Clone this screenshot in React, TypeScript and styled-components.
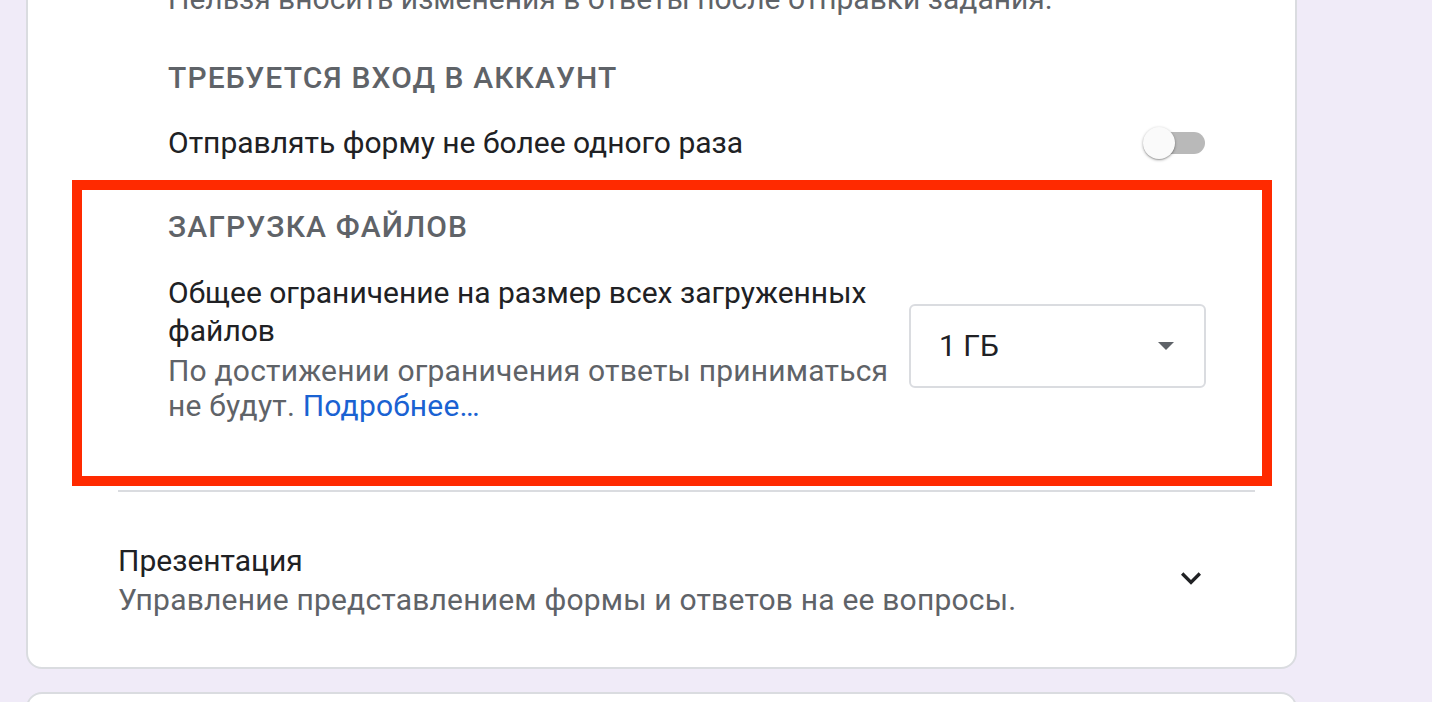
import React from 'react';
import styled, { createGlobalStyle } from 'styled-components';

const GlobalStyle = createGlobalStyle`
  html, body {
    margin: 0;
    padding: 0;
    background: #f0ebf8;
    font-family: Roboto, 'Noto Sans', Arial, sans-serif;
    overflow: hidden;
  }
`;

const Page = styled.div`
  padding-left: 26px;
  width: 1271px;
  height: 702px;
  overflow: hidden;
`;

const Card = styled.div<{ cropTop?: number }>`
  box-sizing: border-box;
  width: 1271px;
  background: #fff;
  border: 2px solid #dadce0;
  border-radius: 16px;
  margin-top: ${({ cropTop }) => (cropTop ? `-${cropTop}px` : '0')};
  padding: 0 40px 48px 90px;
`;

const NextCard = styled(Card)`
  margin-top: 23px;
  height: 80px;
`;

const Section = styled.div`
  padding: 0 49px 0 50px;
`;

const Highlight = styled.div`
  box-sizing: border-box;
  width: 1200px;
  margin-left: -46px;
  margin-top: 17px;
  border: 10px solid #ff2a00;
  padding: 17px 56px 53px 86px;
`;

const Note = styled.div`
  font-size: 30px;
  line-height: 40px;
  color: #5f6368;
`;

const Heading = styled.div<{ top: number }>`
  margin-top: ${({ top }) => top}px;
  font-size: 30px;
  line-height: 40px;
  font-weight: 500;
  letter-spacing: 1.1px;
  text-transform: uppercase;
  color: #5f6368;
`;

const Row = styled.div<{ top: number }>`
  display: flex;
  align-items: center;
  justify-content: space-between;
  gap: 16px;
  margin-top: ${({ top }) => top}px;
`;

const Label = styled.div`
  font-size: 30px;
  line-height: 40px;
  color: #202124;
`;

const TextBlock = styled.div`
  flex: 1;
`;

const Title = styled.div<{ lh?: number }>`
  font-size: 30px;
  line-height: ${({ lh }) => lh || 38}px;
  color: #202124;
`;

const Desc = styled.div<{ lh?: number; top?: number }>`
  margin-top: ${({ top }) => top || 0}px;
  font-size: 30px;
  line-height: ${({ lh }) => lh || 35}px;
  letter-spacing: 0.2px;
  color: #5f6368;
`;

const Link = styled.a`
  color: #1a62d2;
  text-decoration: none;
`;

const Track = styled.div`
  position: relative;
  width: 60px;
  height: 22px;
  margin-right: 1px;
  border-radius: 11px;
  background: #b9b9b9;
`;

const Thumb = styled.div`
  position: absolute;
  left: -2px;
  top: -5px;
  width: 32px;
  height: 32px;
  border-radius: 50%;
  background: #fafafa;
  box-shadow: 0 1px 3px rgba(0, 0, 0, 0.35), 0 1px 1px rgba(0, 0, 0, 0.14);
`;

const Select = styled.div`
  box-sizing: border-box;
  width: 297px;
  height: 84px;
  flex-shrink: 0;
  display: flex;
  align-items: center;
  justify-content: space-between;
  padding: 0 30px 0 28px;
  border: 2px solid #dadce0;
  border-radius: 6px;
  margin-top: -6px;
  font-size: 30px;
  color: #202124;
`;

const Divider = styled.div`
  height: 2px;
  margin-top: 4px;
  background: #dadce0;
`;

const Expand = styled.div`
  display: flex;
  align-items: center;
  justify-content: space-between;
  margin-top: 49px;
`;

const IconBox = styled.div`
  width: 40px;
  height: 40px;
  margin-right: 44px;
  margin-top: -4px;
`;

const Switch = () => (
  <Track>
    <Thumb />
  </Track>
);

export default function App() {
  return (
    <>
      <GlobalStyle />
      <Page>
        <Card cropTop={23}>
          <Section>
            <Note>Нельзя вносить изменения в ответы после отправки задания.</Note>
            <Heading top={39}>Требуется вход в аккаунт</Heading>
            <Row top={25}>
              <Label>Отправлять форму не более одного раза</Label>
              <Switch />
            </Row>
          </Section>
          <Highlight>
            <Heading top={0}>Загрузка файлов</Heading>
            <Row top={27}>
              <TextBlock>
                <Title>Общее ограничение на размер всех загруженных файлов</Title>
                <Desc top={3}>
                  По достижении ограничения ответы приниматься не будут.{' '}
                  <Link href="#">Подробнее…</Link>
                </Desc>
              </TextBlock>
              <Select>
                <span>1 ГБ</span>
                <svg width="16" height="8" viewBox="0 0 16 8">
                  <path d="M0 0h16L8 8z" fill="#5f6368" />
                </svg>
              </Select>
            </Row>
          </Highlight>
          <Divider />
          <Expand>
            <div>
              <Title lh={40}>Презентация</Title>
              <Desc lh={38}>Управление представлением формы и ответов на ее вопросы.</Desc>
            </div>
            <IconBox>
              <svg width="40" height="40" viewBox="0 0 24 24">
                <path d="M16.59 8.59L12 13.17 7.41 8.59 6 10l6 6 6-6z" fill="#202124" />
              </svg>
            </IconBox>
          </Expand>
        </Card>
        <NextCard />
      </Page>
    </>
  );
}
